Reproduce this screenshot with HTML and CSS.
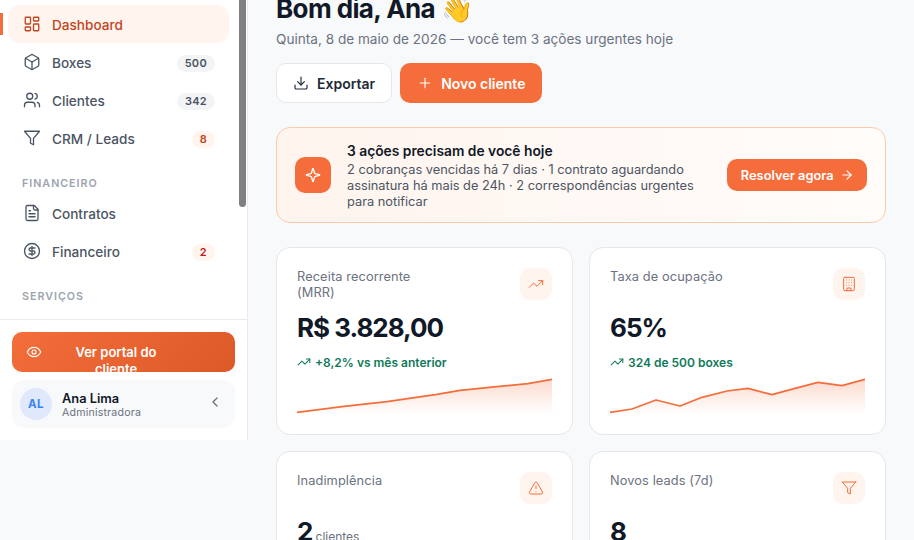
FILE: index.html
```html
<!DOCTYPE html>
<html lang="pt-BR">

<head>
    <meta charset="UTF-8">
    <title>Dashboard</title>
    <link rel="stylesheet" href="styles.css">
</head>

<body>
    <svg class="sprite" xmlns="http://www.w3.org/2000/svg">
        <symbol id="i-dash" viewBox="0 0 24 24"><rect x="3" y="3" width="7" height="9" rx="1"/><rect x="14" y="3" width="7" height="5" rx="1"/><rect x="14" y="12" width="7" height="9" rx="1"/><rect x="3" y="16" width="7" height="5" rx="1"/></symbol>
        <symbol id="i-box" viewBox="0 0 24 24"><path d="M21 8a2 2 0 0 0-1-1.73l-7-4a2 2 0 0 0-2 0l-7 4A2 2 0 0 0 3 8v8a2 2 0 0 0 1 1.73l7 4a2 2 0 0 0 2 0l7-4A2 2 0 0 0 21 16Z"/><path d="m3.3 7 8.7 5 8.7-5"/><path d="M12 22V12"/></symbol>
        <symbol id="i-users" viewBox="0 0 24 24"><path d="M16 21v-2a4 4 0 0 0-4-4H6a4 4 0 0 0-4 4v2"/><circle cx="9" cy="7" r="4"/><path d="M22 21v-2a4 4 0 0 0-3-3.87"/><path d="M16 3.13a4 4 0 0 1 0 7.75"/></symbol>
        <symbol id="i-filter" viewBox="0 0 24 24"><polygon points="22 3 2 3 10 12.46 10 19 14 21 14 12.46 22 3"/></symbol>
        <symbol id="i-file" viewBox="0 0 24 24"><path d="M15 2H6a2 2 0 0 0-2 2v16a2 2 0 0 0 2 2h12a2 2 0 0 0 2-2V7Z"/><path d="M14 2v4a2 2 0 0 0 2 2h4"/><path d="M10 9H8"/><path d="M16 13H8"/><path d="M16 17H8"/></symbol>
        <symbol id="i-dollar" viewBox="0 0 24 24"><circle cx="12" cy="12" r="10"/><path d="M16 8h-6a2 2 0 1 0 0 4h4a2 2 0 1 1 0 4H8"/><path d="M12 18V6"/></symbol>
        <symbol id="i-eye" viewBox="0 0 24 24"><path d="M2 12s3-7 10-7 10 7 10 7-3 7-10 7-10-7-10-7Z"/><circle cx="12" cy="12" r="3"/></symbol>
        <symbol id="i-down" viewBox="0 0 24 24"><path d="M21 15v4a2 2 0 0 1-2 2H5a2 2 0 0 1-2-2v-4"/><polyline points="7 10 12 15 17 10"/><line x1="12" y1="15" x2="12" y2="3"/></symbol>
        <symbol id="i-plus" viewBox="0 0 24 24"><path d="M5 12h14"/><path d="M12 5v14"/></symbol>
        <symbol id="i-left" viewBox="0 0 24 24"><path d="m15 18-6-6 6-6"/></symbol>
        <symbol id="i-arrow" viewBox="0 0 24 24"><path d="M5 12h14"/><path d="m12 5 7 7-7 7"/></symbol>
        <symbol id="i-spark" viewBox="0 0 24 24"><path d="M9.937 15.5A2 2 0 0 0 8.5 14.063l-6.135-1.582a.5.5 0 0 1 0-.962L8.5 9.936A2 2 0 0 0 9.937 8.5l1.582-6.135a.5.5 0 0 1 .963 0L14.063 8.5A2 2 0 0 0 15.5 9.937l6.135 1.581a.5.5 0 0 1 0 .964L15.5 14.063a2 2 0 0 0-1.437 1.437l-1.582 6.135a.5.5 0 0 1-.963 0z"/></symbol>
        <symbol id="i-trend" viewBox="0 0 24 24"><polyline points="22 7 13.5 15.5 8.5 10.5 2 17"/><polyline points="16 7 22 7 22 13"/></symbol>
        <symbol id="i-build" viewBox="0 0 24 24"><rect x="4" y="2" width="16" height="20" rx="2"/><path d="M9 22v-4h6v4"/><path d="M8 6h.01M12 6h.01M16 6h.01M8 10h.01M12 10h.01M16 10h.01M8 14h.01M12 14h.01M16 14h.01"/></symbol>
        <symbol id="i-alert" viewBox="0 0 24 24"><path d="m21.73 18-8-14a2 2 0 0 0-3.48 0l-8 14A2 2 0 0 0 4 21h16a2 2 0 0 0 1.73-3"/><path d="M12 9v4"/><path d="M12 17h.01"/></symbol>
    </svg>

    <div class="app">
        <aside class="sidebar">
            <nav class="nav">
                <a class="nav-item active"><svg class="nav-ico"><use href="#i-dash"/></svg>Dashboard</a>
                <a class="nav-item"><svg class="nav-ico"><use href="#i-box"/></svg>Boxes<span class="count">500</span></a>
                <a class="nav-item"><svg class="nav-ico"><use href="#i-users"/></svg>Clientes<span class="count">342</span></a>
                <a class="nav-item"><svg class="nav-ico"><use href="#i-filter"/></svg>CRM / Leads<span class="count hot">8</span></a>
                <div class="nav-label">FINANCEIRO</div>
                <a class="nav-item"><svg class="nav-ico"><use href="#i-file"/></svg>Contratos</a>
                <a class="nav-item"><svg class="nav-ico"><use href="#i-dollar"/></svg>Financeiro<span class="count hot red">2</span></a>
                <div class="nav-label">SERVIÇOS</div>
                <div class="thumb"></div>
            </nav>
            <div class="side-foot">
                <a class="portal-btn"><svg class="portal-ico"><use href="#i-eye"/></svg><span class="portal-text">Ver portal do cliente</span></a>
                <div class="user">
                    <div class="avatar">AL</div>
                    <div class="user-info">
                        <div class="user-name">Ana Lima</div>
                        <div class="user-role">Administradora</div>
                    </div>
                    <svg class="user-ico"><use href="#i-left"/></svg>
                </div>
            </div>
        </aside>

        <main class="main">
            <h1 class="title">Bom dia, Ana 👋</h1>
            <p class="subtitle">Quinta, 8 de maio de 2026 — você tem 3 ações urgentes hoje</p>

            <div class="actions">
                <a class="btn btn-light"><svg class="btn-ico"><use href="#i-down"/></svg>Exportar</a>
                <a class="btn btn-main"><svg class="btn-ico"><use href="#i-plus"/></svg>Novo cliente</a>
            </div>

            <section class="banner">
                <div class="banner-ico"><svg><use href="#i-spark"/></svg></div>
                <div class="banner-body">
                    <div class="banner-title">3 ações precisam de você hoje</div>
                    <div class="banner-text">2 cobranças vencidas há 7 dias · 1 contrato aguardando assinatura há mais de 24h · 2 correspondências urgentes para notificar</div>
                </div>
                <a class="banner-btn">Resolver agora<svg><use href="#i-arrow"/></svg></a>
            </section>

            <section class="cards">
                <div class="card">
                    <div class="card-top">
                        <div class="card-label">Receita recorrente<br>(MRR)</div>
                        <div class="card-ico"><svg><use href="#i-trend"/></svg></div>
                    </div>
                    <div class="card-value">R$ 3.828,00</div>
                    <div class="card-delta"><svg><use href="#i-trend"/></svg>+8,2% vs mês anterior</div>
                    <svg class="spark" viewBox="0 0 255 40">
                        <defs>
                            <linearGradient id="fade" x1="0" y1="0" x2="0" y2="1">
                                <stop offset="0" stop-color="#f46d3b" stop-opacity=".25"/>
                                <stop offset="1" stop-color="#f46d3b" stop-opacity="0"/>
                            </linearGradient>
                        </defs>
                        <path class="spark-fill" d="M0 36.3L45 30.7L90 25.7L140 18.3L163 14.3L200 10.7L231 7.7L255 3.3V38H0Z"/>
                        <polyline class="spark-line" points="0,36.3 45,30.7 90,25.7 140,18.3 163,14.3 200,10.7 231,7.7 255,3.3"/>
                    </svg>
                </div>

                <div class="card">
                    <div class="card-top">
                        <div class="card-label">Taxa de ocupação</div>
                        <div class="card-ico"><svg><use href="#i-build"/></svg></div>
                    </div>
                    <div class="card-value">65%</div>
                    <div class="card-delta"><svg><use href="#i-trend"/></svg>324 de 500 boxes</div>
                    <svg class="spark" viewBox="0 0 255 40">
                        <path class="spark-fill" d="M0 36.3L22 33L46 24L70 30L92 21.3L117 15L138 12.3L162 18.7L185 12.3L208 6.3L232 9.7L255 3.3V38H0Z"/>
                        <polyline class="spark-line" points="0,36.3 22,33 46,24 70,30 92,21.3 117,15 138,12.3 162,18.7 185,12.3 208,6.3 232,9.7 255,3.3"/>
                    </svg>
                </div>

                <div class="card">
                    <div class="card-top">
                        <div class="card-label">Inadimplência</div>
                        <div class="card-ico"><svg><use href="#i-alert"/></svg></div>
                    </div>
                    <div class="card-value">2 <small>clientes</small></div>
                </div>

                <div class="card">
                    <div class="card-top">
                        <div class="card-label">Novos leads (7d)</div>
                        <div class="card-ico"><svg><use href="#i-filter"/></svg></div>
                    </div>
                    <div class="card-value">8</div>
                </div>
            </section>
        </main>
    </div>
</body>

</html>
```

FILE: styles.css
```css
* {
    margin: 0;
    padding: 0;
    box-sizing: border-box;
}

html, body {
    height: 540px;
    overflow: hidden;
}

body {
    background-color: #f8f9fb;
    font-family: Inter, "Liberation Sans", sans-serif;
    color: #111827;
}

svg {
    fill: none;
    stroke: currentColor;
    stroke-width: 2;
    stroke-linecap: round;
    stroke-linejoin: round;
}

.sprite {
    display: none;
}

.app {
    display: flex;
    align-items: flex-start;
}

/* sidebar */
.sidebar {
    width: 248px;
    height: 440px;
    flex: none;
    display: flex;
    flex-direction: column;
    background-color: #fff;
    border-right: 1px solid #e8eaee;
}

.nav {
    position: relative;
    height: 320px;
    padding: 5px 18px 0 8px;
    border-bottom: 1px solid #e8eaee;
    overflow: hidden;
}

.thumb {
    position: absolute;
    top: 0;
    right: 1px;
    width: 7px;
    height: 207px;
    border-radius: 0 0 4px 4px;
    background-color: #808080;
}

.nav-item {
    position: relative;
    display: flex;
    align-items: center;
    height: 38px;
    padding: 2px 14px 0;
    font-size: 13.6px;
    font-weight: 500;
    color: #4b5563;
    border-radius: 12px;
}

.nav-item.active {
    background-color: #fff4ee;
    color: #c2451e;
}

.nav-item.active::before {
    content: "";
    position: absolute;
    left: -8px;
    top: 8px;
    width: 3px;
    height: 22px;
    background-color: #f46d3b;
}

.nav-ico {
    width: 18px;
    height: 18px;
    margin: 0 11px 2px 1px;
    flex: none;
    stroke-width: 1.75;
}

.count {
    margin-left: auto;
    min-width: 23px;
    height: 17px;
    padding: 0 8px;
    line-height: 17px;
    text-align: center;
    font-size: 11px;
    font-weight: 600;
    letter-spacing: .3px;
    color: #4b5563;
    background-color: #f3f4f6;
    border-radius: 9px;
}

.count.hot {
    color: #c2451e;
    background-color: #fff4ee;
}

.count.hot.red {
    color: #b91c1c;
}

.nav-label {
    padding: 0 14px;
    margin-top: 19.5px;
    margin-bottom: 3.5px;
    height: 14px;
    line-height: 14px;
    font-size: 10.7px;
    font-weight: 600;
    letter-spacing: 1px;
    color: #9ca3af;
}

.side-foot {
    padding: 12px;
    display: flex;
    flex-direction: column;
    gap: 8px;
}

.portal-btn {
    display: flex;
    align-items: flex-start;
    height: 40px;
    padding: 12px 14px;
    overflow: hidden;
    border-radius: 10px;
    background: linear-gradient(135deg, #f46d3b, #dc5a27);
    color: #fff;
    font-size: 13px;
    font-weight: 600;
}

.portal-ico {
    width: 16px;
    height: 16px;
    flex: none;
    stroke-width: 1.75;
}

.portal-text {
    flex: none;
    width: 100px;
    margin-left: 24px;
    line-height: 17px;
    text-align: center;
}

.user {
    display: flex;
    align-items: center;
    height: 48px;
    padding: 0 12px 0 8px;
    border-radius: 12px;
    background-color: #f8f9fb;
}

.avatar {
    width: 32px;
    height: 32px;
    flex: none;
    border-radius: 50%;
    background-color: #dfe9fb;
    color: #3b82f6;
    font-size: 11.5px;
    font-weight: 700;
    letter-spacing: .4px;
    line-height: 32px;
    text-align: center;
    margin-right: 10px;
}

.user-info {
    flex: 1;
    padding-top: 2px;
}

.user-name {
    font-size: 12.8px;
    font-weight: 600;
    line-height: 15px;
}

.user-role {
    font-size: 10.6px;
    line-height: 13px;
    color: #6b7280;
    letter-spacing: .2px;
}

.user-ico {
    width: 16px;
    height: 16px;
    margin-bottom: 4px;
    color: #6b7280;
}

/* main */
.main {
    flex: 1;
    min-width: 0;
    padding: 0 28px;
}

.title {
    margin-top: -9px;
    font-size: 26px;
    line-height: 36px;
    font-weight: 700;
    letter-spacing: -.6px;
}

.subtitle {
    margin-top: 2px;
    font-size: 13.6px;
    line-height: 20px;
    color: #6b7280;
}

.actions {
    display: flex;
    gap: 8px;
    margin-top: 14px;
}

.btn {
    display: flex;
    align-items: center;
    height: 40px;
    padding: 0 16px;
    font-size: 14px;
    font-weight: 600;
    border: 1px solid transparent;
    border-radius: 10px;
}

.btn-ico {
    width: 16px;
    height: 16px;
    margin-right: 8px;
    stroke-width: 1.75;
}

.btn-light {
    background-color: #fff;
    border-color: #e5e7eb;
    color: #1f2937;
}

.btn-main {
    background-color: #f46d3b;
    color: #fff;
}

.banner {
    display: flex;
    align-items: center;
    height: 96px;
    margin-top: 24px;
    padding: 0 18px;
    background: linear-gradient(90deg, #fff4ee, #fffcfa);
    border: 1px solid #fdcbaa;
    border-radius: 14px;
}

.banner-ico {
    width: 36px;
    height: 36px;
    flex: none;
    display: flex;
    align-items: center;
    justify-content: center;
    border-radius: 10px;
    background-color: #f46d3b;
    color: #fff;
    margin-right: 16px;
}

.banner-ico svg {
    width: 16px;
    height: 16px;
}

.banner-body {
    flex: 1;
    min-width: 0;
    padding-top: 2px;
}

.banner-title {
    font-size: 13.8px;
    line-height: 18px;
    font-weight: 600;
}

.banner-text {
    width: 352px;
    margin-top: 2px;
    font-size: 12.8px;
    line-height: 16px;
    color: #4b5563;
}

.banner-btn {
    display: flex;
    align-items: center;
    height: 32px;
    padding: 0 13.5px;
    flex: none;
    border-radius: 10px;
    background-color: #f46d3b;
    color: #fff;
    font-size: 12.8px;
    font-weight: 600;
}

.banner-btn svg {
    width: 14px;
    height: 14px;
    margin-left: 6px;
}

.cards {
    display: grid;
    grid-template-columns: 1fr 1fr;
    gap: 16px;
    margin-top: 24px;
}

.card {
    height: 188px;
    padding: 20px;
    background-color: #fff;
    border: 1px solid #e5e7eb;
    border-radius: 14px;
}

.card-top {
    display: flex;
    justify-content: space-between;
    align-items: flex-start;
    height: 36px;
}

.card-label {
    padding-top: 1px;
    font-size: 12.8px;
    line-height: 16px;
    letter-spacing: .1px;
    color: #6b7280;
}

.card-ico {
    width: 32px;
    height: 32px;
    display: flex;
    align-items: center;
    justify-content: center;
    border-radius: 10px;
    background-color: #fff4ee;
    color: #f46d3b;
}

.card-ico svg {
    width: 16px;
    height: 16px;
    stroke-width: 1.5;
}

.card-value {
    margin-top: 6px;
    font-size: 26px;
    line-height: 36px;
    font-weight: 700;
    letter-spacing: -1px;
}

.card-value small {
    margin-left: -2px;
    font-size: 12px;
    font-weight: 400;
    letter-spacing: 0;
    color: #6b7280;
}

.card-delta {
    display: flex;
    align-items: center;
    margin-top: 7px;
    height: 18px;
    font-size: 12px;
    font-weight: 600;
    color: #0f7a5a;
}

.card-delta svg {
    width: 14px;
    height: 14px;
    margin-right: 4px;
    stroke-width: 1.75;
}

.spark {
    display: block;
    width: 255px;
    height: 40px;
    margin-top: 5px;
}

.spark-fill {
    fill: url(#fade);
    stroke: none;
}

.spark-line {
    stroke: #f46d3b;
    stroke-width: 1.75;
}
```
